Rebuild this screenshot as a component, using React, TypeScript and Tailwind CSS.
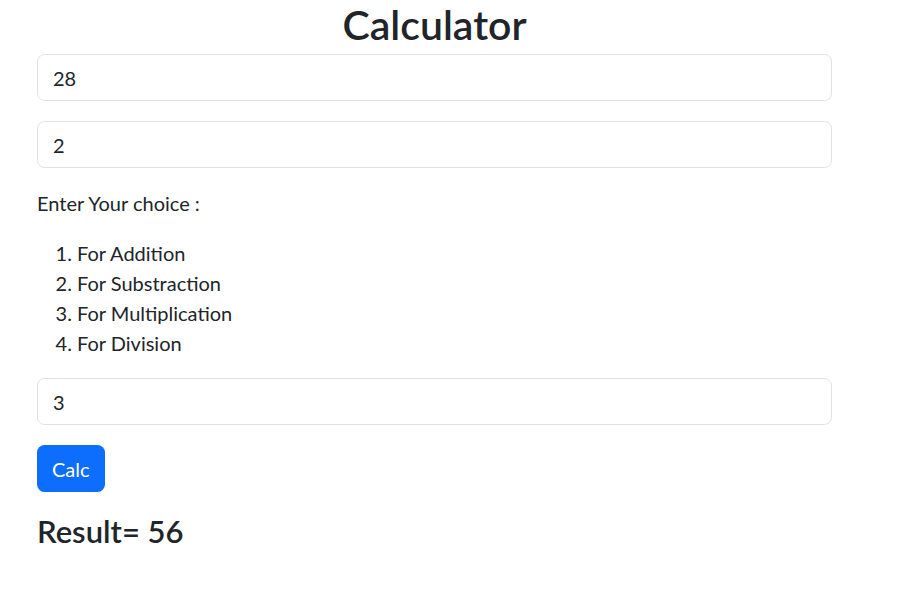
import { useState } from "react";

// Calculator page — Bootstrap-like form at 125% scale

const inputClass =
  "block w-full h-[47px] px-[15px] text-[20px] leading-[30px] text-[#212529] bg-white border border-[#dee2e6] rounded-[7.5px] outline-none";

export default function App() {
  const [a, setA] = useState("28");
  const [b, setB] = useState("2");
  const [choice, setChoice] = useState("3");
  const [result, setResult] = useState<number | string>(56);

  const calc = () => {
    const x = parseFloat(a);
    const y = parseFloat(b);
    switch (choice) {
      case "1":
        setResult(x + y);
        break;
      case "2":
        setResult(x - y);
        break;
      case "3":
        setResult(x * y);
        break;
      case "4":
        setResult(x / y);
        break;
      default:
        setResult("Invalid");
    }
  };

  return (
    <div className="min-h-screen bg-white text-[#212529] font-['Segoe_UI','Lato','Noto_Sans',sans-serif]">
      <div className="w-[795px] ml-[37px]">
        <h1 className="text-center text-[41px] leading-[50px] font-semibold mb-[4px]">
          Calculator
        </h1>

        <input className={inputClass} value={a} onChange={(e) => setA(e.target.value)} />
        <input className={`${inputClass} mt-[20px]`} value={b} onChange={(e) => setB(e.target.value)} />

        <p className="mt-[20px] text-[20px] leading-[30px]">Enter Your choice :</p>
        <ol className="mt-[20px] pl-[40px] list-decimal text-[20px] leading-[30px]">
          <li>For Addition</li>
          <li>For Substraction</li>
          <li>For Multiplication</li>
          <li>For Division</li>
        </ol>

        <input
          className={`${inputClass} mt-[20px]`}
          value={choice}
          onChange={(e) => setChoice(e.target.value)}
        />

        <button
          onClick={calc}
          className="mt-[20px] h-[47px] px-[15px] text-[20px] leading-[30px] text-white bg-[#0d6efd] rounded-[7.5px]"
        >
          Calc
        </button>

        <h3 className="mt-[20px] text-[31px] leading-[38px] font-semibold">
          Result= {result}
        </h3>
      </div>
    </div>
  );
}
